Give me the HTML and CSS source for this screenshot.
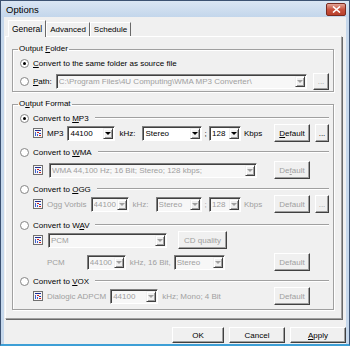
FILE: index.html
```html
<!DOCTYPE html>
<html lang="en">
<head>
  <meta charset="UTF-8" />
  <title>Options</title>
  <link rel="stylesheet" href="styles.css">
</head>
<body>
  <div class="window">
    <div class="titlebar">
      <span class="title">Options</span>
      <span class="close">
        <svg width="9" height="7" viewBox="0 0 9 7"><path d="M1 0.5 L8 6.5 M8 0.5 L1 6.5" stroke="#fff" stroke-width="1.6"/></svg>
      </span>
    </div>

    <div class="client">
      <div class="tabs">
        <div class="tab active">General</div>
        <div class="tab">Advanced</div>
        <div class="tab">Schedule</div>
      </div>

      <div class="panel">
        <fieldset class="group folder">
          <legend>Output <u>F</u>older</legend>
          <div class="opt">
            <span class="radio on"></span>
            <span><u>C</u>onvert to the same folder as source file</span>
          </div>
          <div class="ctl path-row">
            <span class="radio"></span>
            <span><u>P</u>ath:</span>
            <div class="combo off grow">
              <span class="val">C:\Program Files\4U Computing\WMA MP3 Converter\</span>
              <span class="arrow"></span>
            </div>
            <button class="btn dots" disabled>...</button>
          </div>
        </fieldset>

        <fieldset class="group format">
          <legend>O<u>u</u>tput Format</legend>

          <!-- MP3 -->
          <div class="opt">
            <span class="radio on"></span>
            <span>Convert to <u>M</u>P3</span>
            <span class="sep"></span>
          </div>
          <div class="ctl">
            <svg class="icon" viewBox="0 0 10 10"><rect x="0.5" y="0.5" width="9" height="9" fill="#f6f6f6" stroke="#707070"/><rect x="2" y="2" width="6" height="1" fill="#1c2c90"/><rect x="2" y="4" width="1" height="4" fill="#4060d0"/><rect x="4" y="4" width="2" height="1" fill="#d02020"/><rect x="4" y="6" width="1" height="2" fill="#4060d0"/><rect x="6" y="5" width="2" height="1" fill="#2040b0"/><rect x="6" y="7" width="2" height="1" fill="#d02020"/></svg>
            <span class="lbl">MP3</span>
            <div class="combo w48"><span class="val">44100</span><span class="arrow"></span></div>
            <span class="lbl unit">kHz:</span>
            <div class="combo grow"><span class="val">Stereo</span><span class="arrow"></span></div>
            <span class="semi">;</span>
            <div class="combo w32"><span class="val">128</span><span class="arrow"></span></div>
            <span class="kbps">Kbps</span>
            <button class="btn"><u>D</u>efault</button>
            <button class="btn dots">...</button>
          </div>

          <!-- WMA -->
          <div class="opt gap">
            <span class="radio"></span>
            <span>Convert to <u>W</u>MA</span>
            <span class="sep"></span>
          </div>
          <div class="ctl lower">
            <svg class="icon" viewBox="0 0 10 10"><rect x="0.5" y="0.5" width="9" height="9" fill="#f6f6f6" stroke="#707070"/><rect x="2" y="2" width="6" height="1" fill="#1c2c90"/><rect x="2" y="4" width="1" height="4" fill="#4060d0"/><rect x="4" y="4" width="2" height="1" fill="#d02020"/><rect x="4" y="6" width="1" height="2" fill="#4060d0"/><rect x="6" y="5" width="2" height="1" fill="#2040b0"/><rect x="6" y="7" width="2" height="1" fill="#d02020"/></svg>
            <div class="combo off wma"><span class="val">WMA 44,100 Hz; 16 Bit; Stereo; 128 kbps;</span><span class="arrow"></span></div>
            <button class="btn push" disabled>De<u>f</u>ault</button>
            <span class="spacer"></span>
          </div>

          <!-- OGG -->
          <div class="opt gap">
            <span class="radio"></span>
            <span>Convert to <u>O</u>GG</span>
            <span class="sep"></span>
          </div>
          <div class="ctl off">
            <svg class="icon" viewBox="0 0 10 10"><rect x="0.5" y="0.5" width="9" height="9" fill="#f6f6f6" stroke="#707070"/><rect x="2" y="2" width="6" height="1" fill="#1c2c90"/><rect x="2" y="4" width="1" height="4" fill="#4060d0"/><rect x="4" y="4" width="2" height="1" fill="#d02020"/><rect x="4" y="6" width="1" height="2" fill="#4060d0"/><rect x="6" y="5" width="2" height="1" fill="#2040b0"/><rect x="6" y="7" width="2" height="1" fill="#d02020"/></svg>
            <span class="lbl">Ogg Vorbis</span>
            <div class="combo off w38"><span class="val">44100</span><span class="arrow"></span></div>
            <span class="lbl unit">kHz:</span>
            <div class="combo off grow"><span class="val">Stereo</span><span class="arrow"></span></div>
            <span class="semi">;</span>
            <div class="combo off w32"><span class="val">128</span><span class="arrow"></span></div>
            <span class="kbps">Kbps</span>
            <button class="btn" disabled>Default</button>
            <button class="btn dots" disabled>...</button>
          </div>

          <!-- WAV -->
          <div class="opt gap wide">
            <span class="radio"></span>
            <span>Convert to W<u>A</u>V</span>
            <span class="sep"></span>
          </div>
          <div class="ctl off">
            <svg class="icon" viewBox="0 0 10 10"><rect x="0.5" y="0.5" width="9" height="9" fill="#f6f6f6" stroke="#707070"/><rect x="2" y="2" width="6" height="1" fill="#1c2c90"/><rect x="2" y="4" width="1" height="4" fill="#4060d0"/><rect x="4" y="4" width="2" height="1" fill="#d02020"/><rect x="4" y="6" width="1" height="2" fill="#4060d0"/><rect x="6" y="5" width="2" height="1" fill="#2040b0"/><rect x="6" y="7" width="2" height="1" fill="#d02020"/></svg>
            <div class="combo off pcm"><span class="val">PCM</span><span class="arrow"></span></div>
            <button class="btn cd" disabled>CD quality</button>
          </div>
          <div class="ctl off pcm-row">
            <span class="lbl pcm-lbl">PCM</span>
            <div class="combo off w39"><span class="val">44100</span><span class="arrow"></span></div>
            <span class="lbl unit">kHz, 16 Bit,</span>
            <div class="combo off stereo"><span class="val">Stereo</span><span class="arrow"></span></div>
            <button class="btn push" disabled>Default</button>
            <span class="spacer"></span>
          </div>

          <!-- VOX -->
          <div class="opt gap">
            <span class="radio"></span>
            <span>Convert to <u>V</u>OX</span>
            <span class="sep"></span>
          </div>
          <div class="ctl off">
            <svg class="icon" viewBox="0 0 10 10"><rect x="0.5" y="0.5" width="9" height="9" fill="#f6f6f6" stroke="#707070"/><rect x="2" y="2" width="6" height="1" fill="#1c2c90"/><rect x="2" y="4" width="1" height="4" fill="#4060d0"/><rect x="4" y="4" width="2" height="1" fill="#d02020"/><rect x="4" y="6" width="1" height="2" fill="#4060d0"/><rect x="6" y="5" width="2" height="1" fill="#2040b0"/><rect x="6" y="7" width="2" height="1" fill="#d02020"/></svg>
            <span class="lbl">Dialogic ADPCM</span>
            <div class="combo off w48"><span class="val">44100</span><span class="arrow"></span></div>
            <span class="lbl unit">kHz; Mono; 4 Bit</span>
            <button class="btn push" disabled>Default</button>
            <span class="spacer"></span>
          </div>
        </fieldset>
      </div>

      <div class="actions">
        <button class="btn action ok">OK</button>
        <button class="btn action">Cancel</button>
        <button class="btn action"><u>A</u>pply</button>
      </div>
    </div>
  </div>
</body>
</html>
```

FILE: styles.css
```css
body {
  margin: 0;
  font-family: "Liberation Sans", Arial, sans-serif;
  font-size: 8px;
  color: #000;
  background: #c6d8ec;
}
.window {
  width: 350px;
  height: 346px;
  box-sizing: border-box;
  display: flex;
  flex-direction: column;
  border: 1px solid #3c5272;
  border-bottom: 2px solid #3d9fd6;
  background: #c6d8ec;
}
.titlebar {
  height: 16px;
  display: flex;
  align-items: center;
  justify-content: space-between;
  padding: 0 3px 0 5px;
  background: linear-gradient(#dae6f3, #c3d6eb);
}
.title {
  font-size: 9.5px;
}
.close {
  width: 20px;
  height: 13px;
  box-sizing: border-box;
  display: flex;
  align-items: center;
  justify-content: center;
  border: 1px solid #7a2b20;
  border-radius: 2px;
  background: linear-gradient(#e4a597, #c9533f 50%, #b8402c);
}
.client {
  flex: 1;
  margin: 0 3px;
  background: #f0f0f0;
  display: flex;
  flex-direction: column;
}

/* tabs */
.tabs {
  display: flex;
  align-items: flex-end;
  height: 16px;
  margin-top: 3px;
  padding-left: 4px;
  position: relative;
  z-index: 1;
}
.tab {
  height: 14px;
  box-sizing: border-box;
  padding: 1px 3px 0;
  line-height: 12px;
  border: 1px solid;
  border-color: #fff #696969 transparent #fff;
  border-bottom: none;
  background: #f0f0f0;
}
.tab.active {
  height: 17px;
  margin-bottom: -1px;
  padding: 2px 3px 0;
  font-size: 8.5px;
}
.panel {
  height: 283px;
  box-sizing: border-box;
  margin: 0 4px 0 1px;
  padding: 7px 7px 0 6px;
  border: 1px solid;
  border-color: #fff #a0a0a0 #a0a0a0 #fff;
  box-shadow: 1px 1px 0 #696969;
}

/* group boxes */
.group {
  margin: 0;
  min-width: 0;
  padding: 3px 4px 1px 7px;
  border: 1px solid #a0a0a0;
  box-shadow: inset 1px 1px 0 #fff, 1px 1px 0 #fff;
}
.group legend {
  padding: 0 1px;
  margin-left: -2px;
  line-height: 10px;
}
.format {
  margin-top: 7px;
  padding-bottom: 4px;
}

.opt {
  display: flex;
  align-items: center;
  height: 12px;
}
.opt.gap {
  margin-top: 4px;
}
.opt.wide {
  margin-top: 6px;
}
.ctl {
  display: flex;
  align-items: center;
  height: 18px;
}
.ctl.lower {
  margin-top: 3px;
}
.path-row {
  margin-top: 3px;
}
.pcm-row {
  margin-top: 4px;
}
.sep {
  flex: 1;
  height: 0;
  margin-left: 6px;
  border-top: 1px solid #a0a0a0;
  border-bottom: 1px solid #fff;
}
.off {
  color: #a0a0a0;
}

.radio {
  width: 9px;
  height: 9px;
  box-sizing: border-box;
  margin-right: 4px;
  border-radius: 50%;
  border: 1px solid #858585;
  background: #fff;
  display: flex;
  align-items: center;
  justify-content: center;
  flex-shrink: 0;
}
.radio.on::after {
  content: "";
  width: 3px;
  height: 3px;
  border-radius: 50%;
  background: #000;
}

.icon {
  width: 10px;
  height: 10px;
  margin-left: 13px;
  flex-shrink: 0;
}
.lbl {
  margin-left: 4px;
  white-space: nowrap;
}
.unit {
  margin-right: 3px;
}
.pcm-lbl {
  margin-left: 27px;
  margin-right: 18px;
}

/* combo boxes */
.combo {
  height: 15px;
  box-sizing: border-box;
  display: flex;
  align-items: center;
  margin-left: 4px;
  padding-left: 2px;
  background: #fff;
  border: 1px solid;
  border-color: #808080 #fff #fff #808080;
  box-shadow: inset 1px 1px 0 #404040;
  overflow: hidden;
  white-space: nowrap;
}
.combo.off {
  background: #f7f7f7;
  color: #a0a0a0;
}
.combo .val {
  flex: 1;
  overflow: hidden;
  padding-top: 1px;
}
.combo .arrow {
  width: 10px;
  height: 11px;
  margin: 1px 1px 0 1px;
  box-sizing: border-box;
  flex-shrink: 0;
  display: flex;
  align-items: center;
  justify-content: center;
  background: #f0f0f0;
  border: 1px solid;
  border-color: #f0f0f0 #404040 #404040 #f0f0f0;
  box-shadow: inset 1px 1px 0 #fff, inset -1px -1px 0 #a0a0a0;
}
.combo .arrow::after {
  content: "";
  border-left: 3px solid transparent;
  border-right: 3px solid transparent;
  border-top: 3px solid #000;
}
.combo.off .arrow::after {
  border-top-color: #a0a0a0;
}
.grow {
  flex: 1;
}
.w48 { width: 48px; }
.w38 { width: 38px; }
.w39 { width: 39px; }
.w32 { width: 32px; margin-left: 0; }
.wma { width: 208px; margin-left: 6px; }
.pcm { width: 119px; margin-left: 5px; }
.stereo { width: 51px; margin-left: 0; }
.semi {
  width: 7px;
  text-align: center;
}
.kbps {
  width: 30px;
  padding-left: 3px;
}

/* buttons */
.btn {
  font: inherit;
  height: 18px;
  width: 36px;
  padding: 0;
  box-sizing: border-box;
  background: #f0f0f0;
  color: #000;
  border: 1px solid;
  border-color: #fff #404040 #404040 #fff;
  box-shadow: inset -1px -1px 0 #a0a0a0;
  flex-shrink: 0;
}
.btn:disabled {
  color: #a0a0a0;
}
.btn.dots {
  width: 14px;
  margin-left: 5px;
}
.path-row .btn.dots {
  width: 16px;
  height: 17px;
  margin-left: 6px;
}
.btn.push {
  margin-left: auto;
}
.btn.cd {
  width: 49px;
  margin-left: 11px;
}
.spacer {
  width: 19px;
  flex-shrink: 0;
}

.actions {
  display: flex;
  justify-content: flex-end;
  gap: 5px;
  margin-top: 8px;
}
.btn.action {
  width: 56px;
  height: 16px;
}
.btn.ok {
  width: 52px;
}
```
